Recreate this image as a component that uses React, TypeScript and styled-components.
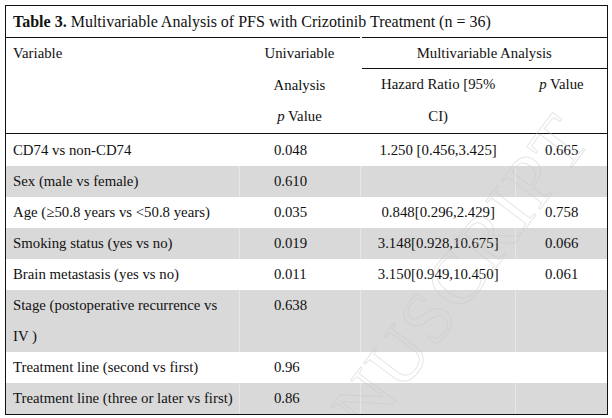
import styled, { createGlobalStyle } from 'styled-components';

const GlobalStyle = createGlobalStyle`
  html, body {
    margin: 0;
    padding: 0;
    background: #fff;
  }
  body {
    font-family: 'Liberation Serif', 'Times New Roman', serif;
    font-size: 14.8px;
    color: #111;
  }
`;

type Row = {
  label: string[];
  uni: string;
  hr?: string;
  p?: string;
  shaded?: boolean;
};

const ROWS: Row[] = [
  { label: ['CD74 vs non-CD74'], uni: '0.048', hr: '1.250 [0.456,3.425]', p: '0.665' },
  { label: ['Sex (male vs female)'], uni: '0.610', shaded: true },
  { label: ['Age (≥50.8 years vs <50.8 years)'], uni: '0.035', hr: '0.848[0.296,2.429]', p: '0.758' },
  { label: ['Smoking status (yes vs no)'], uni: '0.019', hr: '3.148[0.928,10.675]', p: '0.066', shaded: true },
  { label: ['Brain metastasis (yes vs no)'], uni: '0.011', hr: '3.150[0.949,10.450]', p: '0.061' },
  { label: ['Stage (postoperative recurrence vs', 'IV )'], uni: '0.638', shaded: true },
  { label: ['Treatment line (second vs first)'], uni: '0.96' },
  { label: ['Treatment line (three or later vs first)'], uni: '0.86', shaded: true },
];

export default function App() {
  return (
    <Page>
      <GlobalStyle />
      <Frame>
        <Table>
          <colgroup>
            <col style={{ width: 233 }} />
            <col style={{ width: 121 }} />
            <col style={{ width: 155 }} />
            <col style={{ width: 91 }} />
          </colgroup>
          <thead>
            <tr>
              <Title colSpan={4}>
                <b>Table 3.</b> Multivariable Analysis of PFS with Crizotinib Treatment (n = 36)
              </Title>
            </tr>
            <tr>
              <HeadCell rowSpan={2} $align="left">
                Variable
              </HeadCell>
              <HeadCell rowSpan={2}>
                Univariable
                <br />
                Analysis
                <br />
                <i>p</i> Value
              </HeadCell>
              <GroupCell colSpan={2}>Multivariable Analysis</GroupCell>
            </tr>
            <tr>
              <HeadCell>
                Hazard Ratio [95%
                <br />
                CI)
              </HeadCell>
              <HeadCell>
                <i>p</i> Value
              </HeadCell>
            </tr>
          </thead>
          <tbody>
            {ROWS.map((row, i) => (
              <BodyRow key={i} $shaded={row.shaded} $first={i === 0}>
                <LabelCell>
                  {row.label.map((line, j) => (
                    <div key={j}>{line}</div>
                  ))}
                </LabelCell>
                <UniCell>{row.uni}</UniCell>
                <ValueCell>{row.hr}</ValueCell>
                <ValueCell>{row.p}</ValueCell>
              </BodyRow>
            ))}
          </tbody>
        </Table>
        <Watermark>MANUSCRIPT</Watermark>
      </Frame>
    </Page>
  );
}

const Page = styled.div`
  padding: 5px 0 0 5px;
  width: 612px;
  height: 418px;
  box-sizing: border-box;
  overflow: hidden;
`;

const Frame = styled.div`
  position: relative;
  width: 601px;
  border: 1px solid #111;
  overflow: hidden;
`;

const Table = styled.table`
  width: 100%;
  table-layout: fixed;
  border-collapse: collapse;
  border-spacing: 0;
`;

const Title = styled.th`
  text-align: left;
  font-weight: normal;
  font-size: 16px;
  padding: 0 7px;
  height: 31px;
  line-height: 31px;
  border-bottom: 1px solid #111;
  white-space: nowrap;
  b {
    font-weight: bold;
  }
`;

const HeadCell = styled.th<{ $align?: 'left' | 'center' }>`
  font-weight: normal;
  text-align: ${(p) => p.$align ?? 'center'};
  vertical-align: top;
  padding: 0 7px;
  line-height: 31.5px;
  white-space: nowrap;
  tr:nth-child(2) > & {
    border-bottom: 1px solid #111;
  }
  tr:nth-child(3) > & {
    border-bottom: 1px solid #111;
  }
  i {
    font-style: italic;
  }
`;

const GroupCell = styled.th`
  font-weight: normal;
  text-align: center;
  height: 30px;
  line-height: 30px;
  padding: 0;
  border-bottom: 1px solid #111;
  border-left: 2px solid #fff;
`;

const BodyRow = styled.tr<{ $shaded?: boolean; $first?: boolean }>`
  background: ${(p) => (p.$shaded ? '#d9d9d9' : '#fff')};
  td {
    line-height: ${(p) => (p.$first ? '32px' : '31px')};
    border-right: 1px solid ${(p) => (p.$shaded ? '#e6e6e6' : '#fff')};
  }
  td:last-child {
    border-right: none;
  }
`;

const LabelCell = styled.td`
  padding: 0 7px;
  white-space: nowrap;
  vertical-align: top;
`;

const UniCell = styled.td`
  padding: 0 0 0 34px;
  vertical-align: top;
`;

const ValueCell = styled.td`
  padding: 0;
  text-align: center;
  vertical-align: top;
  white-space: nowrap;
`;

/* faint "accepted manuscript" stamp lying over the table */
const Watermark = styled.div`
  position: absolute;
  left: 268px;
  top: 472px;
  font-family: 'Liberation Serif', serif;
  font-size: 74px;
  line-height: 86px;
  letter-spacing: 2px;
  color: transparent;
  -webkit-text-stroke: 1px rgba(200, 200, 200, 0.45);
  transform: rotate(-53deg);
  transform-origin: left center;
  pointer-events: none;
  white-space: nowrap;
`;
